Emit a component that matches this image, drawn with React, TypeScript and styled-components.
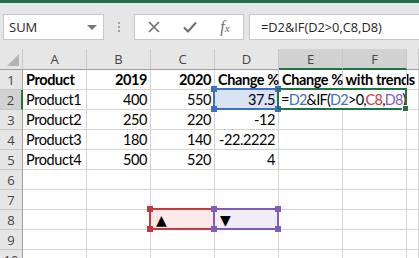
import styled, { createGlobalStyle, css } from "styled-components";

const GlobalStyle = createGlobalStyle`
  html, body {
    margin: 0;
    padding: 0;
    background: #fff;
    overflow: hidden;
  }
  body {
    font-family: Lato, "Noto Sans", sans-serif;
  }
`;

const Window = styled.div`
  width: 419px;
  height: 258px;
  overflow: hidden;
  display: flex;
  flex-direction: column;
`;

const TitleStrip = styled.div`
  flex: none;
  height: 3px;
  background: #217346;
`;

const FormulaBar = styled.div`
  flex: none;
  height: 46px;
  box-sizing: border-box;
  background: #e6e6e6;
  display: flex;
  align-items: flex-start;
  padding: 11px 0 0 3px;
`;

const Box = styled.div`
  flex: none;
  height: 26px;
  box-sizing: border-box;
  border: 1px solid #c6c6c6;
  background: #fff;
  display: flex;
  align-items: center;
`;

const NameBox = styled(Box)`
  width: 101px;
  justify-content: space-between;
  padding: 0 6px 0 5px;
  font-family: "Open Sans", sans-serif;
  font-size: 13px;
  color: #262626;
`;

const Caret = styled.span`
  width: 0;
  height: 0;
  border-left: 5px solid transparent;
  border-right: 5px solid transparent;
  border-top: 5px solid #777;
`;

const Grip = styled.div`
  flex: none;
  width: 2px;
  height: 12px;
  margin: 7px 14px 0 14px;
  background: radial-gradient(circle, #a0a0a0 0.9px, transparent 1.1px) 0 0 / 2px 4px repeat-y;
`;

const ActionBox = styled(Box)`
  width: 110px;
  display: grid;
  grid-template-columns: 38px 34px 36px;
  justify-items: center;
  align-items: center;
  color: #6d6d6d;
`;

const Fx = styled.span`
  font-family: "Liberation Serif", serif;
  font-style: italic;
  font-size: 16px;
  color: #6d6d6d;
  sub {
    font-size: 11px;
    vertical-align: baseline;
  }
`;

const FormulaInput = styled(Box)`
  flex: 1;
  margin: 0 -4px 0 5px;
  padding-left: 11px;
  font-family: "Open Sans", sans-serif;
  font-size: 12.8px;
  color: #262626;
`;

const Sheet = styled.div`
  display: grid;
  grid-template-columns: 23px repeat(6, 64px) 1fr;
  grid-template-rows: 21px;
  grid-auto-rows: 20px;
  font-size: 14.5px;
  letter-spacing: -0.4px;
  color: #000;
`;

const HeadCell = styled.div<{ $selected?: boolean; $row?: boolean }>`
  box-sizing: border-box;
  background: ${(p) => (p.$selected ? "#d2d2d2" : "#e6e6e6")};
  color: #444;
  font-family: "Open Sans", sans-serif;
  font-size: 13px;
  letter-spacing: 0;
  display: flex;
  align-items: center;
  justify-content: center;
  border-right: 1px solid ${(p) => (p.$row ? "#9e9e9e" : "#c8c8c8")};
  border-bottom: 1px solid ${(p) => (p.$row ? "#c8c8c8" : "#9e9e9e")};
  ${(p) =>
    p.$selected &&
    (p.$row
      ? css`
          border-right: 2px solid #217346;
        `
      : css`
          border-bottom: 2px solid #217346;
        `)}
`;

const Corner = styled(HeadCell)`
  position: relative;
  &::after {
    content: "";
    position: absolute;
    right: 3px;
    bottom: 3px;
    border-left: 12px solid transparent;
    border-bottom: 12px solid #b4b4b4;
  }
`;

const Cell = styled.div<{ $right?: boolean; $bold?: boolean; $span?: number; $fill?: string }>`
  position: relative;
  box-sizing: border-box;
  min-width: 0;
  border-right: 1px solid #d4d4d4;
  border-bottom: 1px solid #d4d4d4;
  background: ${(p) => p.$fill || "transparent"};
  display: flex;
  align-items: flex-end;
  justify-content: ${(p) => (p.$right ? "flex-end" : "flex-start")};
  padding: 0 3px 1px 3px;
  font-weight: ${(p) => (p.$bold ? 700 : 400)};
  white-space: nowrap;
  overflow: visible;
  ${(p) =>
    p.$span &&
    css`
      grid-column: span ${p.$span};
    `}
`;

const EditText = styled.span`
  letter-spacing: -0.75px;
  margin-left: -1px;
`;

const Frame = styled.div<{ $tone: string }>`
  position: absolute;
  inset: -2px -1px -1px -2px;
  border: 2px solid ${(p) => p.$tone};
  pointer-events: none;
  z-index: 2;
`;

const Handle = styled.span<{ $tone: string; $x: "l" | "r"; $y: "t" | "b" }>`
  position: absolute;
  width: 6px;
  height: 6px;
  background: ${(p) => p.$tone};
  ${(p) => (p.$x === "l" ? "left: -4px;" : "right: -4px;")}
  ${(p) => (p.$y === "t" ? "top: -4px;" : "bottom: -4px;")}
`;

const EditFrame = styled.div`
  position: absolute;
  inset: -2px -1px -1px -2px;
  border: 2px solid #217346;
  z-index: 3;
  &::after {
    content: "";
    position: absolute;
    right: -4px;
    bottom: -4px;
    width: 5px;
    height: 5px;
    background: #217346;
    border: 1px solid #fff;
  }
`;

const Ref = styled.span<{ $tone: string }>`
  color: ${(p) => p.$tone};
`;

const Tri = styled.span`
  font-family: "DejaVu Sans", sans-serif;
  font-size: 14px;
  padding-left: 2px;
`;

const BLUE = "#3f6fc4";
const RED = "#c2393f";
const PURPLE = "#7f5cb8";

const RangeFrame = ({ tone }: { tone: string }) => (
  <Frame $tone={tone}>
    <Handle $tone={tone} $x="l" $y="t" />
    <Handle $tone={tone} $x="l" $y="b" />
    <Handle $tone={tone} $x="r" $y="t" />
    <Handle $tone={tone} $x="r" $y="b" />
  </Frame>
);

const cols = ["A", "B", "C", "D", "E", "F", ""];

const rows: [string, string, string, string][] = [
  ["Product2", "250", "220", "-12"],
  ["Product3", "180", "140", "-22.2222"],
  ["Product4", "500", "520", "4"],
];

const Empty = ({ n }: { n: number }) => (
  <>
    {Array.from({ length: n }, (_, i) => (
      <Cell key={i} />
    ))}
  </>
);

export default function App() {
  return (
    <Window>
      <GlobalStyle />
      <TitleStrip />
      <FormulaBar>
        <NameBox>
          SUM
          <Caret />
        </NameBox>
        <Grip />
        <ActionBox>
          <svg width="12" height="12" viewBox="0 0 12 12">
            <path d="M1 1L11 11M11 1L1 11" stroke="#6d6d6d" strokeWidth="1.6" />
          </svg>
          <svg width="14" height="12" viewBox="0 0 14 12">
            <path d="M1 6.5L5 10.5L13 1.5" stroke="#6d6d6d" strokeWidth="2" fill="none" />
          </svg>
          <Fx>
            f<sub>x</sub>
          </Fx>
        </ActionBox>
        <FormulaInput>=D2&amp;IF(D2&gt;0,C8,D8)</FormulaInput>
      </FormulaBar>
      <Sheet>
        <Corner />
        {cols.map((c, i) => (
          <HeadCell key={i} $selected={c === "E" || c === "F"}>
            {c}
          </HeadCell>
        ))}

        <HeadCell $row>1</HeadCell>
        <Cell $bold>Product</Cell>
        <Cell $bold $right>2019</Cell>
        <Cell $bold $right>2020</Cell>
        <Cell $bold>Change %</Cell>
        <Cell $bold>Change % with trends</Cell>
        <Cell />
        <Cell />

        <HeadCell $row $selected>2</HeadCell>
        <Cell>Product1</Cell>
        <Cell $right>400</Cell>
        <Cell $right>550</Cell>
        <Cell $right $fill="#d9e3f4">
          37.5
          <RangeFrame tone={BLUE} />
        </Cell>
        <Cell $span={2}>
          <EditText>
            =<Ref $tone={BLUE}>D2</Ref>&amp;IF(<Ref $tone={BLUE}>D2</Ref>&gt;0,
            <Ref $tone={RED}>C8</Ref>,<Ref $tone={PURPLE}>D8</Ref>)
          </EditText>
          <EditFrame />
        </Cell>
        <Cell />

        {rows.map((r, i) => (
          <RowGroup key={i} n={i + 3} r={r} />
        ))}

        {[6, 7].map((n) => (
          <Blank key={n} n={n} />
        ))}

        <HeadCell $row>8</HeadCell>
        <Empty n={2} />
        <Cell $fill="#fbe9ea">
          <Tri>▲</Tri>
          <RangeFrame tone={RED} />
        </Cell>
        <Cell $fill="#f0ecf8">
          <Tri>▼</Tri>
          <RangeFrame tone={PURPLE} />
        </Cell>
        <Empty n={3} />

        {[9, 10].map((n) => (
          <Blank key={n} n={n} />
        ))}
      </Sheet>
    </Window>
  );
}

function RowGroup({ n, r }: { n: number; r: [string, string, string, string] }) {
  return (
    <>
      <HeadCell $row>{n}</HeadCell>
      <Cell>{r[0]}</Cell>
      <Cell $right>{r[1]}</Cell>
      <Cell $right>{r[2]}</Cell>
      <Cell $right>{r[3]}</Cell>
      <Empty n={3} />
    </>
  );
}

function Blank({ n }: { n: number }) {
  return (
    <>
      <HeadCell $row>{n}</HeadCell>
      <Empty n={7} />
    </>
  );
}
